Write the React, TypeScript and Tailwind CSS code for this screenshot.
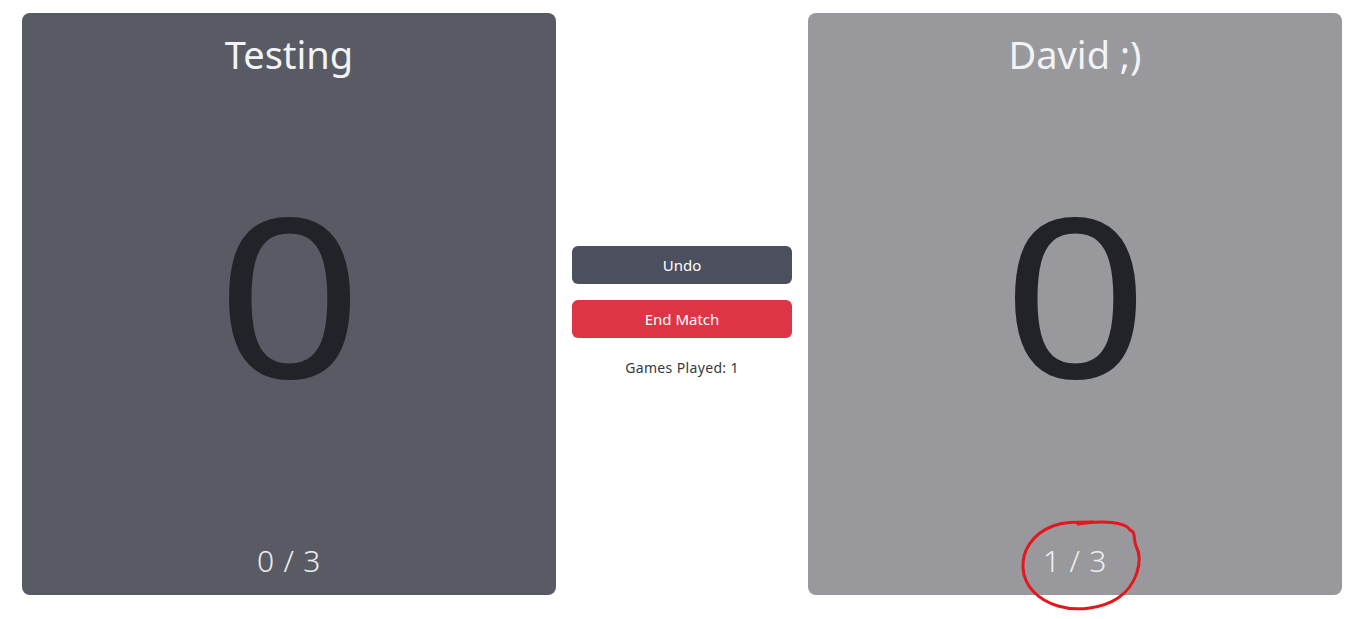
import { useState } from "react";

const players = [
  { name: "Testing", score: 0, wins: 0, bg: "bg-[#595b64]" },
  { name: "David ;)", score: 0, wins: 1, bg: "bg-[#98989d]" },
];

const PlayerCard = ({ name, score, wins, bg }: { name: string; score: number; wins: number; bg: string }) => {
  return (
    <div className={`${bg} w-[534px] h-[582px] rounded-lg flex flex-col items-center justify-between`}>
      {/* name */}
      <h2 className="text-[38px] leading-none text-[#f1f3f5] mt-[22px]">{name}</h2>
      {/* current score */}
      <div className="text-[222px] leading-none text-[#212329] -mt-[36px] scale-x-[1.15]">{score}</div>
      {/* match wins */}
      <div className="text-[30px] leading-none text-[#eceef0] font-light tracking-wide mb-[19px]">
        {wins} / 3
      </div>
    </div>
  );
};

export default function App() {
  const [games] = useState(1);

  return (
    <div className="relative w-[1357px] h-[619px] bg-white pt-[13px] pl-[22px] pr-[15px] flex gap-4" style={{ fontFamily: '"Noto Sans", "Open Sans", sans-serif' }}>
      <PlayerCard {...players[0]} />

      {/* controls */}
      <div className="w-[220px] h-[582px] flex flex-col items-center justify-center gap-4 pt-[16px]">
        <button className="w-full h-[38px] rounded-md bg-[#4b4f5e] text-white text-[15px]">Undo</button>
        <button className="w-full h-[38px] rounded-md bg-[#dc3545] text-white text-[15px]">End Match</button>
        <p className="text-[14px] text-[#343a40] mt-[3px] tracking-wide">Games Played: {games}</p>
      </div>

      <PlayerCard {...players[1]} />

      {/* red marker circle drawn over the screenshot */}
      <svg className="absolute left-[1018px] top-[516px] pointer-events-none" width="130" height="100" viewBox="0 0 130 100">
        <path
          d="M60 8 C 85 4, 108 6, 112 14 C 118 16, 115 22, 118 30 C 126 45, 118 70, 100 82 C 85 92, 60 96, 40 90 C 20 84, 6 70, 5 52 C 4 35, 14 18, 35 10 C 45 6, 55 6, 75 6"
          fill="none"
          stroke="#e3171d"
          strokeWidth="3"
          strokeLinecap="round"
        />
      </svg>
    </div>
  );
}
